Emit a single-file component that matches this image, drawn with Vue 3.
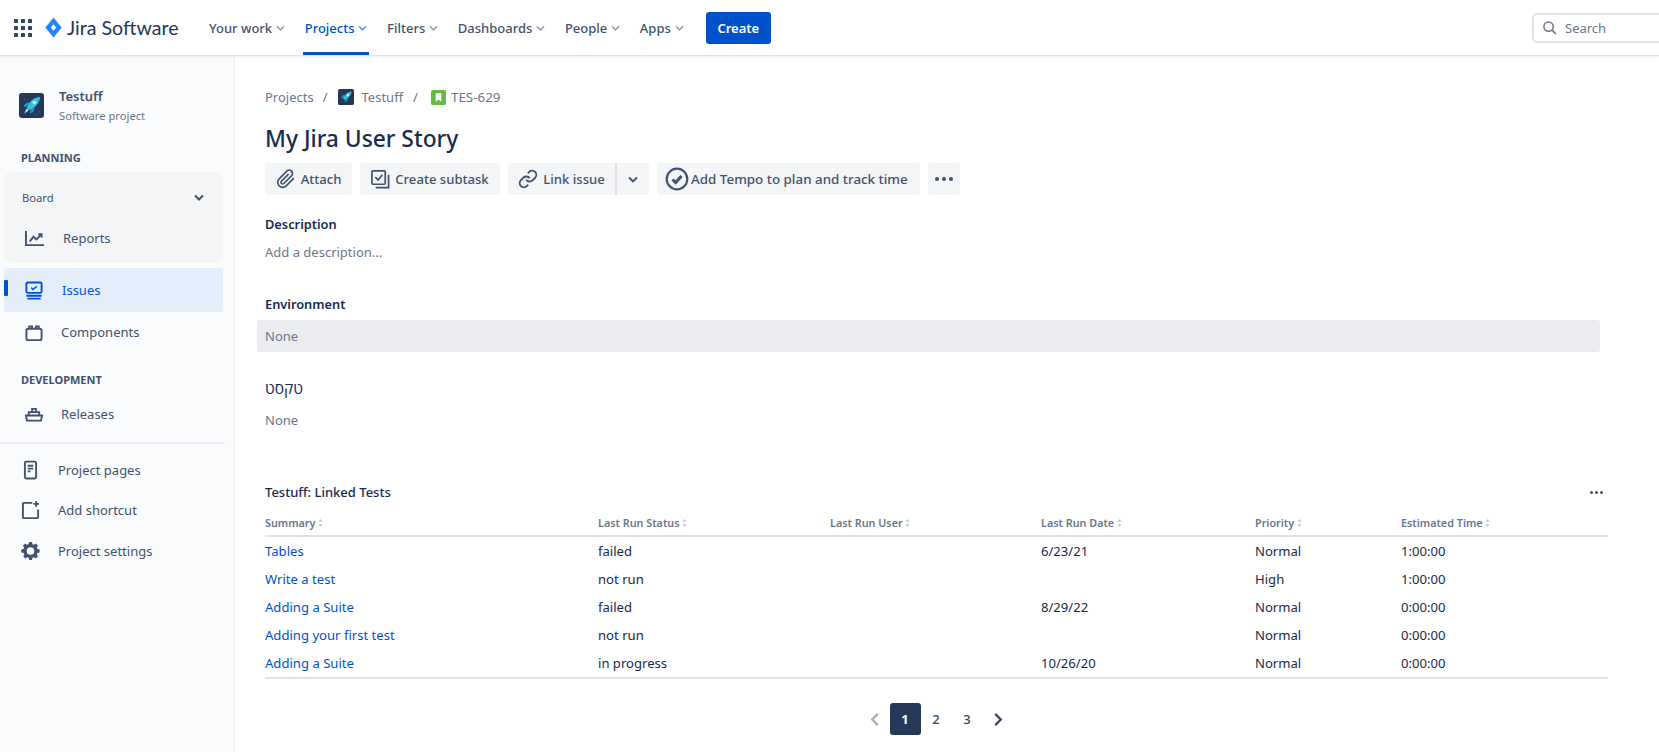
<template>
  <div class="app">
    <header class="topbar">
      <button class="apps-btn" type="button" aria-label="Apps">
        <svg viewBox="0 0 18 18" width="18" height="18" fill="#344563">
          <rect v-for="c in gridCells" :key="c.x + '-' + c.y" :x="c.x" :y="c.y" width="4" height="4" rx="0.6" />
        </svg>
      </button>
      <div class="logo">
        <svg viewBox="0 0 20 24" width="19" height="23">
          <path fill="#2684FF" fill-rule="evenodd" d="M10 1.5 18.6 12 10 22.5 1.4 12zM10 8.6 7.2 12 10 15.4 12.8 12z" />
        </svg>
        <span>Jira Software</span>
      </div>
      <nav class="nav">
        <a v-for="item in navItems" :key="item" class="nav-item" :class="{ active: item === 'Projects' }">
          {{ item }}
          <svg viewBox="0 0 10 6" width="9" height="6" fill="none" stroke="currentColor" stroke-width="1.7">
            <path d="M1 1l4 4 4-4" />
          </svg>
        </a>
      </nav>
      <button class="create-btn" type="button">Create</button>
      <div class="search">
        <svg viewBox="0 0 16 16" width="15" height="15" fill="none" stroke="#6b778c" stroke-width="1.6">
          <circle cx="7" cy="7" r="5" />
          <path d="M10.8 10.8l4 4" />
        </svg>
        <span>Search</span>
      </div>
    </header>

    <div class="body">
      <aside class="sidebar">
        <div class="project">
          <svg class="avatar" viewBox="0 0 26 26" width="25" height="25">
            <rect width="26" height="26" rx="3" fill="#253858" />
            <path fill="#4a5f85" d="M5 6h1.500v1.500H5zM20 19h1.500v1.500H20zM17 22h1.500v1.500H17zM8 10h1.500v1.500H8z" />
            <path fill="#1c9ec2" d="M11 9.500 6.500 11l-2 3.500 4-.5zM16.500 15 15 19.500l-3.500 2 .5-4z" />
            <path fill="#35c2e0" d="M22 4c-5 .5-9 3-11.500 7l-2.500 4.500 2.500 2.500 4.500-2.500c4-2.500 6.500-6.500 7-11.500z" />
            <circle cx="16" cy="10" r="1.800" fill="#fff" />
            <path fill="#d8f3fa" d="M8 16l2 2-4.500 3.500z" />
          </svg>
          <div>
            <div class="project-name">Testuff</div>
            <div class="project-type">Software project</div>
          </div>
        </div>

        <div class="side-heading planning">PLANNING</div>
        <div class="board-group">
          <div class="board-row">
            <span>Board</span>
            <svg viewBox="0 0 10 6" width="10" height="7" fill="none" stroke="#42526e" stroke-width="2">
              <path d="M1 1l4 4 4-4" />
            </svg>
          </div>
          <a class="side-link reports">
            <svg viewBox="0 0 22 20" width="21" height="19" fill="none" stroke="#42526e" stroke-width="2">
              <path d="M2 2v15h19" />
              <path d="M6 13l4-5 3 3 5-5" />
              <path d="M15 5.5h3.500V9" />
            </svg>
            <span>Reports</span>
          </a>
        </div>

        <a class="side-link issues">
          <svg viewBox="0 0 20 20" width="20" height="19" fill="none" stroke="#0052cc" stroke-width="2">
            <rect x="2" y="1.500" width="16" height="11" rx="1.500" />
            <path d="M7 7l2 2 4-3.500" stroke-width="1.600" />
            <path d="M2 15.500h16M3 18.500h14" />
          </svg>
          <span>Issues</span>
        </a>
        <a class="side-link components">
          <svg viewBox="0 0 20 20" width="20" height="19" fill="none" stroke="#42526e" stroke-width="2">
            <rect x="2" y="6" width="16" height="12" rx="2" />
            <path d="M5 6V3.500h3V6M12 6V3.500h3V6" />
          </svg>
          <span>Components</span>
        </a>

        <div class="side-heading development">DEVELOPMENT</div>
        <a class="side-link releases">
          <svg viewBox="0 0 20 18" width="20" height="17" fill="none" stroke="#42526e" stroke-width="2">
            <path d="M1.500 10h17l-1 5.500h-15z" />
            <path d="M4.500 10V6.500h11V10M8 6.500V3h4v3.500" />
          </svg>
          <span>Releases</span>
        </a>

        <div class="side-divider"></div>

        <a class="side-link extra pages">
          <svg viewBox="0 0 16 20" width="15" height="20" fill="none" stroke="#42526e" stroke-width="2">
            <rect x="2" y="1" width="12" height="18" rx="1.500" />
            <path d="M5 5.500h6M5 8.500h6M5 11.500h3" />
          </svg>
          <span>Project pages</span>
        </a>
        <a class="side-link extra shortcut">
          <svg viewBox="0 0 20 20" width="19" height="19" fill="none" stroke="#42526e" stroke-width="2">
            <path d="M12 2H3a1 1 0 0 0-1 1v14a1 1 0 0 0 1 1h14a1 1 0 0 0 1-1V9" />
            <path d="M16 0v6M13 3h6" />
          </svg>
          <span>Add shortcut</span>
        </a>
        <a class="side-link extra">
          <svg viewBox="0 0 20 20" width="19" height="19" fill="#42526e">
            <path fill-rule="evenodd" d="M11.600 1l.5 2.300 1.600.7 2-1.300 2.200 2.200-1.300 2 .7 1.600 2.300.5v3l-2.300.5-.7 1.600 1.300 2-2.200 2.200-2-1.300-1.600.7-.5 2.300h-3l-.5-2.300-1.600-.7-2 1.300-2.200-2.200 1.300-2-.7-1.600L.3 12V9l2.300-.5.7-1.600-1.300-2 2.200-2.200 2 1.300 1.600-.7L8.600 1zM10 6.500a4 4 0 1 0 0 8 4 4 0 0 0 0-8z" />
          </svg>
          <span>Project settings</span>
        </a>
      </aside>

      <main class="content">
        <div class="crumbs">
          <span>Projects</span>
          <span class="slash">/</span>
          <svg viewBox="0 0 26 26" width="16" height="16">
            <rect width="26" height="26" rx="3" fill="#253858" />
            <path fill="#1c9ec2" d="M11 9.500 6.500 11l-2 3.500 4-.5zM16.500 15 15 19.500l-3.500 2 .5-4z" />
            <path fill="#35c2e0" d="M22 4c-5 .5-9 3-11.500 7l-2.500 4.500 2.500 2.500 4.500-2.500c4-2.500 6.500-6.500 7-11.500z" />
            <circle cx="16" cy="10" r="1.800" fill="#fff" />
          </svg>
          <span class="crumb-project">Testuff</span>
          <span class="slash second">/</span>
          <svg viewBox="0 0 16 16" width="15" height="15">
            <rect width="16" height="16" rx="2" fill="#65ba43" />
            <path fill="#fff" d="M5 3.500h6v9l-3-2.500-3 2.500z" />
          </svg>
          <span class="crumb-key">TES-629</span>
        </div>

        <h1 class="title">My Jira User Story</h1>

        <div class="toolbar">
          <button class="tool attach" type="button">
            <svg viewBox="0 0 24 24" width="20" height="20" fill="none" stroke="#42526e" stroke-width="2">
              <path d="M21.440 11.050l-9.190 9.190a6 6 0 0 1-8.490-8.490l9.190-9.190a4 4 0 0 1 5.660 5.660l-9.200 9.190a2 2 0 0 1-2.830-2.830l8.490-8.480" />
            </svg>
            Attach
          </button>
          <button class="tool subtask" type="button">
            <svg viewBox="0 0 20 20" width="19" height="19" fill="none" stroke="#42526e" stroke-width="1.800">
              <rect x="1" y="1" width="14" height="14" rx="1" />
              <path d="M4.500 7.500l3 3L12 5" />
              <path d="M18.500 5v13.500H5" />
            </svg>
            Create subtask
          </button>
          <div class="split">
            <button class="tool link" type="button">
              <svg viewBox="0 0 24 24" width="20" height="20" fill="none" stroke="#42526e" stroke-width="2.200">
                <path d="M10 13a5 5 0 0 0 7.540.54l3-3a5 5 0 0 0-7.070-7.070l-1.720 1.710" />
                <path d="M14 11a5 5 0 0 0-7.540-.54l-3 3a5 5 0 0 0 7.070 7.070l1.710-1.710" />
              </svg>
              Link issue
            </button>
            <button class="tool caret" type="button" aria-label="More link options">
              <svg viewBox="0 0 10 6" width="10" height="7" fill="none" stroke="#42526e" stroke-width="1.800">
                <path d="M1 1l4 4 4-4" />
              </svg>
            </button>
          </div>
          <button class="tool tempo" type="button">
            <svg viewBox="0 0 24 24" width="24" height="24" fill="none" stroke="#42526e">
              <circle cx="12" cy="12" r="10.300" stroke-width="2.200" />
              <path d="M7.500 12.500l3.200 3 5.800-6.500" stroke-width="3" />
            </svg>
            Add Tempo to plan and track time
          </button>
          <button class="tool more" type="button" aria-label="More">
            <i></i><i></i><i></i>
          </button>
        </div>

        <section class="field description">
          <h2>Description</h2>
          <p>Add a description...</p>
        </section>

        <section class="field environment">
          <h2>Environment</h2>
          <p>None</p>
        </section>

        <section class="field hebrew">
          <h2>טקסט</h2>
          <p>None</p>
        </section>

        <section class="linked">
          <div class="linked-head">
            <h3>Testuff: Linked Tests</h3>
            <span class="linked-more"><i></i><i></i><i></i></span>
          </div>
          <table class="tests">
            <colgroup>
              <col v-for="c in columns" :key="c.label" :style="{ width: c.width + 'px' }" />
            </colgroup>
            <thead>
              <tr>
                <th v-for="c in columns" :key="c.label">
                  {{ c.label }}
                  <svg viewBox="0 0 6 10" width="5" height="8" fill="#c1c7d0">
                    <path d="M3 0l2.500 3.500h-5zM3 10L.5 6.500h5z" />
                  </svg>
                </th>
              </tr>
            </thead>
            <tbody>
              <tr v-for="(row, i) in rows" :key="i">
                <td><a>{{ row.summary }}</a></td>
                <td>{{ row.status }}</td>
                <td></td>
                <td>{{ row.date }}</td>
                <td>{{ row.priority }}</td>
                <td>{{ row.time }}</td>
              </tr>
            </tbody>
          </table>
          <div class="pager">
            <svg viewBox="0 0 10 16" width="10" height="15" fill="none" stroke="#a5adba" stroke-width="2.400">
              <path d="M8 2L2 8l6 6" />
            </svg>
            <button class="page current" type="button">1</button>
            <button class="page" type="button">2</button>
            <button class="page" type="button">3</button>
            <svg viewBox="0 0 10 16" width="10" height="15" fill="none" stroke="#344563" stroke-width="2.400">
              <path d="M2 2l6 6-6 6" />
            </svg>
          </div>
        </section>
      </main>
    </div>
  </div>
</template>

<script setup>
const gridCells = []
for (const y of [0, 7, 14]) {
  for (const x of [0, 7, 14]) gridCells.push({ x, y })
}

const navItems = ['Your work', 'Projects', 'Filters', 'Dashboards', 'People', 'Apps']

const columns = [
  { label: 'Summary', width: 333 },
  { label: 'Last Run Status', width: 232 },
  { label: 'Last Run User', width: 211 },
  { label: 'Last Run Date', width: 214 },
  { label: 'Priority', width: 146 },
  { label: 'Estimated Time', width: 207 }
]

const rows = [
  { summary: 'Tables', status: 'failed', date: '6/23/21', priority: 'Normal', time: '1:00:00' },
  { summary: 'Write a test', status: 'not run', date: '', priority: 'High', time: '1:00:00' },
  { summary: 'Adding a Suite', status: 'failed', date: '8/29/22', priority: 'Normal', time: '0:00:00' },
  { summary: 'Adding your first test', status: 'not run', date: '', priority: 'Normal', time: '0:00:00' },
  { summary: 'Adding a Suite', status: 'in progress', date: '10/26/20', priority: 'Normal', time: '0:00:00' }
]
</script>

<style>
html,
body {
  margin: 0;
  background: #fff;
}
</style>

<style scoped>
.app {
  height: 752px;
  display: flex;
  flex-direction: column;
  overflow: hidden;
  font-family: "Noto Sans", "Open Sans", "Liberation Sans", sans-serif;
  font-size: 13px;
  color: #172b4d;
}

button {
  font-family: inherit;
  border: 0;
}

/* top bar */
.topbar {
  height: 56px;
  flex-shrink: 0;
  box-sizing: border-box;
  display: flex;
  align-items: center;
  padding-left: 14px;
  border-bottom: 1px solid #dfe1e6;
  box-shadow: 0 1px 2px rgba(9, 30, 66, 0.08);
  position: relative;
  overflow: hidden;
}

.apps-btn {
  background: none;
  padding: 0;
  display: flex;
  margin-right: 12px;
}

.logo {
  display: flex;
  align-items: center;
  gap: 4px;
  font-family: Lato, "Noto Sans", sans-serif;
  font-size: 19.6px;
  color: #253858;
  width: 163px;
  flex-shrink: 0;
}

.nav {
  display: flex;
  height: 100%;
  gap: 15.6px;
}

.nav-item {
  height: 100%;
  display: flex;
  align-items: center;
  gap: 4px;
  padding: 0 2px;
  box-sizing: border-box;
  font-weight: 500;
  color: #42526e;
  border-bottom: 3px solid transparent;
  border-top: 3px solid transparent;
}

.nav-item svg {
  color: #97a0af;
}

.nav-item.active {
  color: #0052cc;
  border-bottom-color: #0052cc;
}

.nav-item.active svg {
  color: #4c9aff;
}

.create-btn {
  margin-left: 20px;
  width: 65px;
  height: 32px;
  border-radius: 3px;
  background: #0052cc;
  color: #fff;
  font-size: 13px;
  font-weight: 600;
}

.search {
  margin-left: auto;
  margin-right: -38px;
  width: 165px;
  height: 30px;
  flex-shrink: 0;
  box-sizing: border-box;
  border: 2px solid #dfe1e6;
  border-radius: 5px;
  display: flex;
  align-items: center;
  gap: 8px;
  padding-left: 8px;
  color: #6b778c;
}

/* sidebar */
.body {
  flex: 1;
  display: flex;
  min-height: 0;
}

.sidebar {
  width: 235px;
  flex-shrink: 0;
  box-sizing: border-box;
  background: #fafbfc;
  border-right: 1px solid #ebecf0;
  padding: 0 11px 0 4px;
}

.project {
  display: flex;
  align-items: center;
  gap: 15px;
  padding: 30px 0 0 15px;
}

.project-name {
  font-size: 13px;
  font-weight: 600;
  color: #42526e;
  line-height: 20px;
}

.project-type {
  font-size: 11.2px;
  color: #6b778c;
  line-height: 18px;
  margin-top: 1px;
}

.side-heading {
  font-size: 11px;
  font-weight: 700;
  color: #42526e;
  line-height: 16px;
  padding-left: 17px;
}

.planning {
  margin-top: 25px;
  margin-bottom: 6px;
}

.development {
  margin-top: 20px;
}

.board-group {
  height: 91px;
  background: #f4f5f7;
  border-radius: 8px;
  box-sizing: border-box;
  padding-top: 15px;
}

.board-row {
  display: flex;
  align-items: center;
  justify-content: space-between;
  padding: 0 19px 0 18px;
  font-size: 11.2px;
  color: #42526e;
  height: 20px;
}

.side-link {
  display: flex;
  align-items: center;
  gap: 18px;
  height: 40px;
  padding-left: 20px;
  border-radius: 3px;
  color: #42526e;
  position: relative;
}

.reports {
  margin-top: 13px;
  height: 36px;
}

.issues {
  margin-top: 5px;
  height: 44px;
  background: #e4eefb;
  color: #0052cc;
}

.issues::before {
  content: "";
  position: absolute;
  left: 0;
  top: 12px;
  width: 4px;
  height: 16px;
  background: #0052cc;
  border-radius: 1px;
}

.components {
  gap: 17px;
}

.releases {
  height: 36px;
  margin-top: 8px;
  gap: 17px;
}

.side-divider {
  height: 2px;
  background: #ebecf0;
  margin: 10px -2px 5px -3px;
}

.extra {
  gap: 18px;
  padding-left: 17px;
  height: 41px;
}

.extra.pages {
  gap: 20px;
  padding-left: 19px;
}

.extra.shortcut {
  height: 40px;
}

/* main column */
.content {
  flex: 1;
  min-width: 0;
  padding: 31px 51px 0 30px;
}

.crumbs {
  display: flex;
  align-items: center;
  height: 20px;
  color: #6b778c;
}

.slash {
  margin: 0 10px 0 9px;
}

.slash.second {
  margin: 0 13px 0 10px;
}

.crumb-project {
  margin-left: 8px;
}

.crumb-key {
  margin-left: 5px;
  font-size: 13.4px;
}

.title {
  margin: 16px 0 0;
  font-size: 22.8px;
  font-weight: 500;
  line-height: 32px;
  color: #172b4d;
}

.toolbar {
  display: flex;
  gap: 8px;
  margin-top: 8px;
}

.tool {
  height: 32px;
  display: flex;
  align-items: center;
  gap: 5px;
  padding: 0;
  border-radius: 3px;
  background: #f4f5f7;
  color: #42526e;
  font-size: 13.1px;
  font-weight: 500;
}

.attach {
  width: 87px;
  justify-content: center;
}

.subtask {
  width: 140px;
  justify-content: center;
}

.split {
  display: flex;
}

.link {
  width: 109px;
  justify-content: center;
  border-radius: 3px 0 0 3px;
  border-right: 2px solid #dfe1e6;
  box-sizing: border-box;
}

.caret {
  width: 32px;
  justify-content: center;
  border-radius: 0 3px 3px 0;
}

.tempo {
  width: 263px;
  padding-left: 8px;
  gap: 2px;
  font-size: 13.4px;
}

.more {
  width: 32px;
  justify-content: center;
  gap: 3px;
}

.more i,
.linked-more i {
  display: block;
  border-radius: 50%;
  background: #42526e;
}

.more i {
  width: 4px;
  height: 4px;
}

.field h2 {
  margin: 0;
  font-size: 12.8px;
  font-weight: 600;
  line-height: 20px;
  color: #172b4d;
}

.field p {
  margin: 0;
  line-height: 20px;
  color: #6b778c;
}

.description {
  margin-top: 19px;
}

.description p {
  margin-top: 8px;
}

.environment {
  margin-top: 32px;
}

.environment p {
  margin: 6px 8px 0 -8px;
  height: 32px;
  line-height: 32px;
  padding-left: 8px;
  background: #ebecf0;
  border-radius: 3px;
}

.hebrew {
  margin-top: 26px;
}

.hebrew h2 {
  font-size: 15.5px;
  font-weight: 400;
}

.hebrew p {
  margin-top: 12px;
}

.linked {
  margin-top: 52px;
}

.linked-head {
  display: flex;
  align-items: center;
  justify-content: space-between;
  height: 20px;
  padding-right: 5px;
}

.linked-head h3 {
  margin: 0;
  font-size: 13px;
  font-weight: 500;
  color: #172b4d;
}

.linked-more {
  display: flex;
  gap: 2px;
}

.linked-more i {
  width: 3px;
  height: 3px;
}

.tests {
  width: 100%;
  table-layout: fixed;
  border-collapse: collapse;
  margin-top: 9px;
  border-bottom: 2px solid #dfe1e6;
}

.tests th {
  height: 22px;
  padding: 0 0 2px;
  text-align: left;
  font-size: 10.8px;
  font-weight: 600;
  color: #6b778c;
  border-bottom: 2px solid #dfe1e6;
  white-space: nowrap;
}

.tests td {
  height: 28px;
  padding: 0;
  font-size: 13.1px;
  color: #172b4d;
}

.tests a {
  color: #0052cc;
}

.pager {
  display: flex;
  align-items: center;
  justify-content: center;
  margin-top: 24px;
  margin-left: -1px;
}

.page {
  width: 31px;
  height: 32px;
  border-radius: 3px;
  background: none;
  color: #344563;
  font-size: 13px;
  font-weight: 500;
  padding: 0;
}

.page.current {
  background: #253858;
  color: #fff;
  font-weight: 700;
}

.pager svg {
  margin: 0 10px;
}
</style>
